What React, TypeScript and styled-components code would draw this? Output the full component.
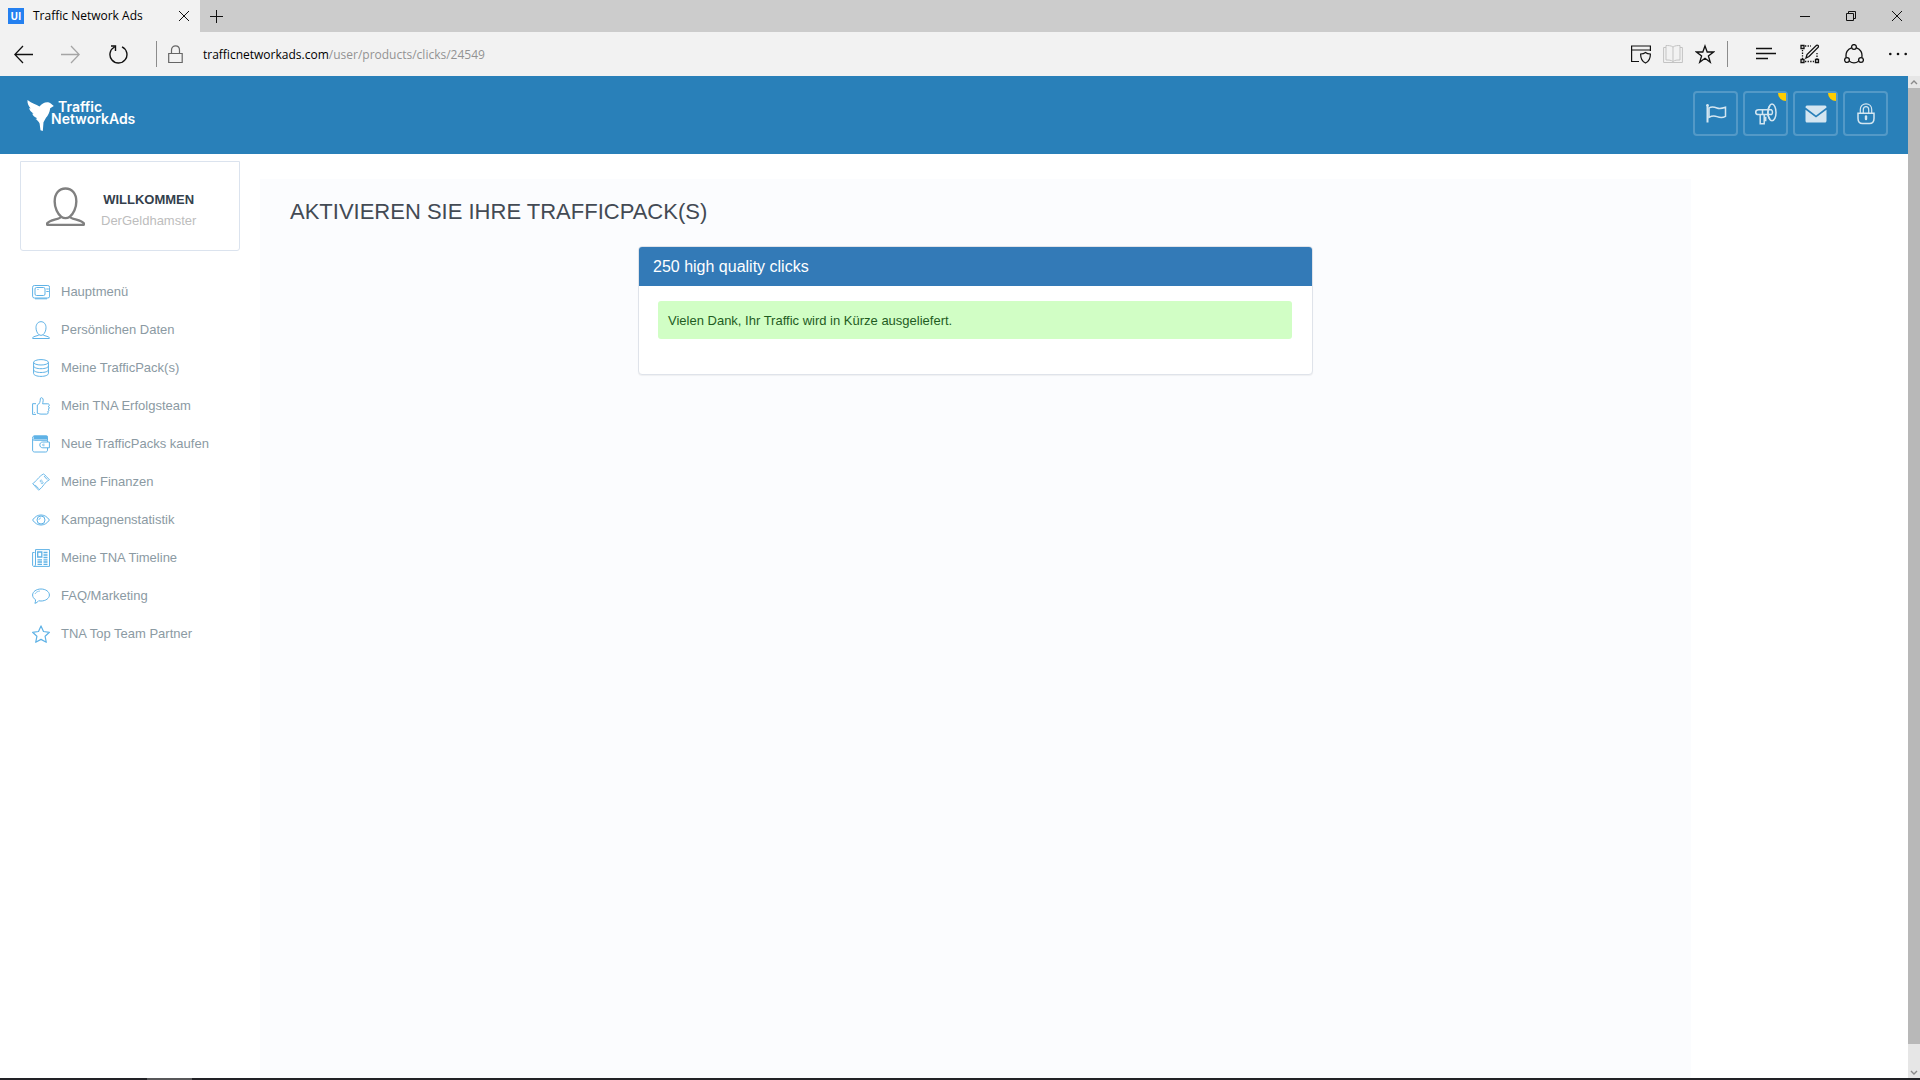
import React from "react";
import styled, { createGlobalStyle } from "styled-components";

const sans = `"Liberation Sans", Arial, sans-serif`;
const chromeFont = `"Open Sans", "Noto Sans", sans-serif`;

const GlobalStyle = createGlobalStyle`
  *, *::before, *::after { box-sizing: border-box; }
  body { margin: 0; background: #fff; font-family: ${sans}; }
  button { margin: 0; padding: 0; border: 0; background: none; color: inherit; font: inherit; cursor: pointer; }
  svg { display: block; flex: none; }
`;

const Shell = styled.div`
  display: flex;
  flex-direction: column;
  min-height: 100vh;
`;

const TabStrip = styled.div`
  display: flex;
  height: 32px;
  background: #ccc;
  color: #000;
  font: 12px/16px ${chromeFont};
`;

const Tab = styled.div`
  display: flex;
  align-items: center;
  width: 200px;
  height: 100%;
  padding: 0 11px 0 8px;
  background: #f2f2f2;
`;

const Favicon = styled.span`
  width: 16px;
  height: 16px;
  margin-right: 9px;
  background: #2480f0;
  color: #fff;
  font: bold 10px/16px ${chromeFont};
  text-align: center;
`;

const TabTitle = styled.span`
  flex: 1;
  white-space: nowrap;
`;

const ChromeButton = styled.button<{ $width: number; $dim?: boolean }>`
  display: flex;
  align-items: center;
  justify-content: center;
  width: ${(p) => p.$width}px;
  height: 100%;
  color: ${(p) => (p.$dim ? "#a5a5a5" : "#111")};
`;

const WindowControls = styled.div`
  display: flex;
  margin-left: auto;
`;

const Toolbar = styled.div`
  display: flex;
  align-items: center;
  height: 44px;
  background: #f2f2f2;
`;

const Divider = styled.span<{ $before: number; $after: number }>`
  width: 1px;
  height: 26px;
  margin: 0 ${(p) => p.$after}px 0 ${(p) => p.$before}px;
  background: #8c8c8c;
`;

const Address = styled.button`
  display: flex;
  flex: 1;
  align-items: center;
  gap: 20px;
  height: 100%;
  color: #000;
  font: 12px/18px ${chromeFont};
  text-align: left;
`;

const AddressText = styled.span`
  padding-top: 1px;
`;

const AddressPath = styled.span`
  color: #929292;
`;

const Viewport = styled.div`
  display: flex;
  flex: 1;
`;

const Page = styled.div`
  display: flex;
  flex: 1;
  flex-direction: column;
  min-width: 0;
`;

const Scrollbar = styled.div`
  display: flex;
  flex-direction: column;
  width: 12px;
  background: #e6e6e6;
  color: #8a8a8a;
`;

const ScrollButton = styled.button<{ $height: number }>`
  display: flex;
  align-items: center;
  justify-content: center;
  width: 12px;
  height: ${(p) => p.$height}px;
`;

const ScrollThumb = styled.div`
  flex: 1;
  margin-bottom: 24px;
  background: #b8b8b8;
`;

const Header = styled.header`
  display: flex;
  align-items: center;
  justify-content: space-between;
  height: 78px;
  padding: 0 20px 0 27px;
  background: #2980b9;
`;

const Logo = styled.a`
  display: flex;
  color: #fff;
  text-decoration: none;
  font: 600 14px/12px Inter, Lato, sans-serif;
`;

const LogoText = styled.span`
  display: flex;
  flex-direction: column;
  margin: 1px 0 0 -3px;
`;

const LogoTop = styled.span`
  padding-left: 7px;
`;

const Actions = styled.nav`
  display: flex;
  gap: 5px;
  margin-bottom: 3px;
`;

const ActionButton = styled.button`
  position: relative;
  display: flex;
  align-items: center;
  justify-content: center;
  width: 45px;
  height: 45px;
  border: 2px solid rgba(255, 255, 255, 0.2);
  border-radius: 4px;
  color: #d4e6f1;
`;

const Badge = styled.span`
  position: absolute;
  top: 0;
  right: 0;
  width: 8px;
  height: 8px;
  border-bottom-left-radius: 8px;
  background: #fc0;
`;

const Body = styled.div`
  display: flex;
  flex: 1;
`;

const Sidebar = styled.aside`
  flex: none;
  width: 260px;
  padding: 7px 20px 0;
`;

const UserCard = styled.div`
  display: flex;
  align-items: center;
  gap: 16px;
  height: 90px;
  padding-left: 25px;
  border: 1px solid #dbe3ee;
  border-radius: 0 0 3px 3px;
  color: #808080;
`;

const UserText = styled.div`
  padding-top: 7px;
  font-size: 13px;
  line-height: 21px;
  text-align: center;
  color: #bdbdbd;
`;

const Welcome = styled.strong`
  display: block;
  color: #34404c;
`;

const Menu = styled.ul`
  margin: 22px 0 0;
  padding: 0;
  list-style: none;
`;

const MenuLink = styled.a`
  display: flex;
  align-items: center;
  gap: 11px;
  height: 38px;
  padding-left: 12px;
  color: #8b9aa3;
  font-size: 13px;
  line-height: 18px;
  text-decoration: none;
  white-space: nowrap;

  svg { color: #5fb2e6; }
`;

const Content = styled.main`
  width: 75%;
  margin-top: 25px;
  padding: 18px 30px;
  background: #fbfcfe;
`;

const Title = styled.h1`
  margin: 0;
  color: #434a54;
  font-size: 22px;
  font-weight: 400;
  line-height: 30px;
  text-transform: uppercase;
`;

const Panel = styled.section`
  width: 100%;
  max-width: 675px;
  margin: 19px auto 0;
  overflow: hidden;
  border: 1px solid #dfe3ea;
  border-radius: 4px;
  background: #fff;
  box-shadow: 0 1px 1px rgba(0, 0, 0, 0.05);
`;

const PanelTitle = styled.h2`
  margin: 0;
  padding: 10px 14px 9px;
  background: #337ab7;
  color: #fff;
  font-size: 16px;
  font-weight: 400;
  line-height: 20px;
`;

const PanelBody = styled.div`
  padding: 15px 20px 35px 19px;
`;

const Alert = styled.p`
  margin: 0;
  padding: 11px 10px 9px;
  border-radius: 3px;
  background: #d1fec5;
  color: #1f5c1f;
  font-size: 13px;
  line-height: 18px;
`;

const Taskbar = styled.div`
  display: flex;
  height: 2px;
  padding-left: 147px;
  background: #222226;
`;

const TaskbarItem = styled.span`
  width: 45px;
  background: #58585a;
`;

type IconProps = { w?: number; h?: number; sw?: number; box?: string; children: React.ReactNode };

const Icon = ({ w = 20, h = w, sw = 1, box, children }: IconProps) => (
  <svg
    width={w}
    height={h}
    viewBox={box ?? `0 0 ${w} ${h}`}
    fill="none"
    stroke="currentColor"
    strokeWidth={sw}
    aria-hidden="true"
  >
    {children}
  </svg>
);

const UserGlyph = (
  <path d="M9 .7c3 0 5 2.4 5 6 0 3-1.400 5.800-3 7 .3 1.200 5.500 1.300 6.500 3.100.1.300 0 .7-.4.7H.9c-.4 0-.5-.4-.4-.7C1.500 15 6.700 14.900 7 13.700c-1.600-1.200-3-4-3-7C4 3.100 6 .7 9 .7zM7 13.700c1.200.8 2.800.8 4 0" />
);

const menu: { label: string; icon: React.ReactNode }[] = [
  {
    label: "Hauptmenü",
    icon: (
      <>
        <rect x=".6" y="2.500" width="17" height="12.500" rx="1.800" />
        <rect x="3" y="4.500" width="10" height="8" rx="1.500" />
        <path d="M14.300 6h2.500M14.300 8.500h2.500M3 15.800h12" />
        <path d="M5 6.500h2" strokeWidth=".5" />
      </>
    ),
  },
  { label: "Persönlichen Daten", icon: UserGlyph },
  {
    label: "Meine TrafficPack(s)",
    icon: (
      <>
        <ellipse cx="9" cy="3.300" rx="7.400" ry="2.700" />
        <path d="M1.600 3.300v11.200c0 1.600 3.300 2.900 7.400 2.900s7.400-1.300 7.400-2.900V3.300M1.600 7c0 1.600 3.300 2.700 7.400 2.700s7.400-1.100 7.400-2.700M1.600 10.800c0 1.600 3.300 2.700 7.400 2.700s7.400-1.100 7.400-2.700" />
      </>
    ),
  },
  {
    label: "Mein TNA Erfolgsteam",
    icon: (
      <>
        <path d="M5.300 8C7.700 7 8.300 4.500 8.300 2c0-2 2.900-1.800 2.900 1.300 0 1.500-.6 2.600-.6 3.500h5.200c2 0 2 2.600.3 2.700 1.700.2 1.500 2.700-.1 2.700 1.300.3 1.100 2.500-.4 2.500 1 .4.7 2.400-.9 2.400H9c-1.800 0-2.200-.8-3.700-.8z" />
        <path d="M4 6.700H.6v10.700H4M2.200 15.500h.6" />
      </>
    ),
  },
  {
    label: "Neue TrafficPacks kaufen",
    icon: (
      <>
        <path d="M1.600.8h14v3.700h-14z" fill="currentColor" stroke="none" />
        <path d="M15.500 7V5.300H2.500C1 5.300.6 4.500.6 3.500V15c0 1.300.8 2 2 2h11c1.200 0 1.900-.7 1.900-2v-2.200M.6 3C.6 1.500 1.500.8 3 .8h11c1 0 1.500.4 1.500 1.400v3M17.400 7h-6.600c-4 0-4 5.800 0 5.800h6.600z" />
        <path d="M12.500 9.200h-1.200c-1 0-1 1.500 0 1.500h1.200" strokeWidth=".8" />
      </>
    ),
  },
  {
    label: "Meine Finanzen",
    icon: (
      <>
        <path d="M.7 10.500C3.500 9.500 7 3 11.500 1c2 1.200 3.500 3.200 5.900 5.800C13 8.300 11 14.500 6.700 17.200 5 15.200 2.500 13 .7 10.500zM3 11.800l3.800 3.900M12 3l3.200 3.600" strokeWidth=".9" />
        <path d="M10.300 7.500C9.300 6.600 7.500 7.400 8.300 8.600c.9.900 2.200-.2 2.800.6.600 1.100-1.200 2-2.300 1" strokeWidth=".8" />
      </>
    ),
  },
  {
    label: "Kampagnenstatistik",
    icon: (
      <>
        <path d="M.6 9C5 2.300 13 2.300 17.400 9 13 15.700 5 15.700.6 9z" />
        <circle cx="9" cy="9" r="4" />
        <path d="M7 9c0-1.300.9-2 2-2" strokeWidth=".8" />
      </>
    ),
  },
  {
    label: "Meine TNA Timeline",
    icon: (
      <>
        <path d="M3.500.6h14v16.800H2C1 17.400.6 17 .6 16V3.500h2M3.500.6V15c0 1.400-.4 2.400-1.400 2.400" />
        <path d="M5.700 3h4.100v5H5.700z" strokeWidth="1.300" />
        <path d="M11.500 3.500h4M11.500 6h4M11.500 8.500h4M5.500 10.800h4.500M11.500 10.800h4M5.500 13h4.500M11.500 13h4M5.500 15.300h4.500M11.500 15.300h4" strokeWidth="1.300" />
      </>
    ),
  },
  {
    label: "FAQ/Marketing",
    icon: (
      <>
        <path d="M9 2c4.700 0 8.400 2.700 8.400 6s-3.700 6-8.400 6c-.8 0-1.600-.1-2.400-.2C5.600 15 4.500 16 2.900 16.300c.5-.9.7-2 .6-3.600C1.700 11.600.6 9.900.6 8c0-3.300 3.700-6 8.400-6z" />
        <path d="M3 7c.8-1.800 2.700-2.800 5-3" strokeWidth=".7" />
      </>
    ),
  },
  {
    label: "TNA Top Team Partner",
    icon: <path d="M9 .9l2.500 5.600 5.900.8-4.300 4 1.200 6-5.300-2.900-5.300 2.900 1.200-6-4.300-4 5.900-.8z" strokeWidth="1.200" strokeLinejoin="round" />,
  },
];

const actions: { label: string; badge?: boolean; icon: React.ReactNode }[] = [
  {
    label: "Sprache",
    icon: (
      <>
        <path d="M2.500 2.500v17" strokeWidth="2" />
        <circle cx="2.500" cy="2.300" r="1.300" fill="currentColor" stroke="none" />
        <path d="M4 5c3-2 5.500-1 8 0s5 .5 8.500-.7v9c-3 1.700-6 1.200-8.500.3s-5-.9-8 .7z" />
      </>
    ),
  },
  {
    label: "Neuigkeiten",
    badge: true,
    icon: (
      <>
        <path d="M13 6.800H3.500c-3.700 0-3.700 4.800 0 4.800H13M7.500 7v4.500M5.200 12v8.800h4V12M9.200 14.500h1.500v3H9.200" />
        <ellipse cx="17" cy="9.400" rx="4" ry="8.400" />
        <path d="M15 2.500c-3 4-3 10 0 14" />
        <path d="M13 6.800h3.500c1.300.8 1.300 4 0 4.800H13" />
      </>
    ),
  },
  {
    label: "Nachrichten",
    badge: true,
    icon: (
      <>
        <path d="M.5 4.500C.5 3 1.300 2.500 2.500 2.500h17c1.200 0 2 .5 2 2L11 12.500z" fill="currentColor" stroke="none" />
        <path d="M.5 6.700L11 14.500l10.500-7.800v11c0 1.300-.8 1.800-2 1.800h-17c-1.200 0-2-.5-2-1.800z" fill="currentColor" stroke="none" />
      </>
    ),
  },
  {
    label: "Abmelden",
    icon: (
      <>
        <path d="M3 10.200h16v5c0 3.500-2 5.300-4.500 5.300h-7C5 20.500 3 18.700 3 15.200z" />
        <path d="M5.300 10V6.500C5.300 3 7.700.8 11 .8s5.700 2.200 5.700 5.700V10M8.300 10V6.500c0-1.900 1.100-2.900 2.700-2.900s2.700 1 2.700 2.900V10" strokeWidth="1.200" />
        <path d="M11 13.500v2.600" strokeWidth="2.400" strokeLinecap="round" />
      </>
    ),
  },
];

export default function App() {
  return (
    <Shell>
      <GlobalStyle />
      <TabStrip>
        <Tab>
          <Favicon>UI</Favicon>
          <TabTitle>Traffic Network Ads</TabTitle>
          <ChromeButton $width={10} aria-label="Tab schließen">
            <Icon w={10}><path d="M0 0l10 10M10 0L0 10" /></Icon>
          </ChromeButton>
        </Tab>
        <ChromeButton $width={33} aria-label="Neuer Tab">
          <Icon w={13}><path d="M6.500 0v13M0 6.500h13" /></Icon>
        </ChromeButton>
        <WindowControls>
          <ChromeButton $width={46} aria-label="Minimieren">
            <Icon w={10}><path d="M0 5.500h10" /></Icon>
          </ChromeButton>
          <ChromeButton $width={46} aria-label="Verkleinern">
            <Icon w={10}><path d="M.5 2.500h7v7h-7zM2.500 2.500v-2h7v7h-2" /></Icon>
          </ChromeButton>
          <ChromeButton $width={46} aria-label="Schließen">
            <Icon w={10}><path d="M0 0l10 10M10 0L0 10" /></Icon>
          </ChromeButton>
        </WindowControls>
      </TabStrip>

      <Toolbar>
        <ChromeButton $width={46} aria-label="Zurück">
          <Icon w={19} sw={1.3}><path d="M19 9.500H1M9 1L.8 9.500 9 18" /></Icon>
        </ChromeButton>
        <ChromeButton $width={48} $dim aria-label="Vorwärts">
          <Icon w={19} sw={1.3}><path d="M0 9.500h18M10 1l8.200 8.500L10 18" /></Icon>
        </ChromeButton>
        <ChromeButton $width={48} aria-label="Aktualisieren">
          <Icon w={19} sw={1.4}><path d="M5.500 2A8.500 8.500 0 1 0 13 1.800M2 1h4.500v5" /></Icon>
        </ChromeButton>
        <Divider $before={14} $after={11} />
        <Address aria-label="Adresse">
          <Icon w={15} h={18} sw={1.2}><path d="M.7 8.500h13.500v9H.7zM3.500 8.500V5c0-5.500 8-5.500 8 0v3.500" stroke="#666" /></Icon>
          <AddressText>trafficnetworkads.com<AddressPath>/user/products/clicks/24549</AddressPath></AddressText>
        </Address>
        <ChromeButton $width={32} aria-label="Sicherheitsbericht">
          <Icon w={20} sw={1.2}>
            <path d="M8 17.500H.6V2h18.800v5M.6 6h18.800M14.500 8.500c1.200 1 3 1.500 4.900 1.500 0 4.500-1.400 7.500-4.900 9-3.500-1.500-4.900-4.500-4.900-9 1.900 0 3.700-.5 4.900-1.500z" />
          </Icon>
        </ChromeButton>
        <ChromeButton $width={32} aria-label="Leseansicht" disabled>
          <Icon w={20}>
            <path d="M10 3C8 1.500 5 1.500 3 1.500V16c3 0 5 0 7 1.500 2-1.500 4-1.500 7-1.500V1.500c-2 0-5 0-7 1.500zv14.500M3 3.500H.6v15h18.800v-15H17" stroke="#c3c3c3" />
          </Icon>
        </ChromeButton>
        <ChromeButton $width={32} aria-label="Favorit hinzufügen">
          <Icon w={20} sw={1.3}><path d="M10 2l2.200 6h6.300l-5.100 3.900 1.900 6.300-5.300-3.900-5.300 3.900 1.900-6.300L1.500 8h6.300z" /></Icon>
        </ChromeButton>
        <Divider $before={6} $after={16} />
        <ChromeButton $width={44} aria-label="Hub">
          <Icon w={20} sw={1.3}><path d="M0 4.500h16M0 9.500h20M0 14.500h12" /></Icon>
        </ChromeButton>
        <ChromeButton $width={44} aria-label="Webseitennotiz">
          <Icon w={20} sw={1.3}>
            <path d="M1 1.500h3v3H1zM1 15.500h3v3H1zM15.500 15.500h3v3h-3z" />
            <path d="M5 2h6M2.500 6v9M17 9v6M5 17.500h10" strokeDasharray="1.300 1.300" />
            <path d="M6 14l1-3.500L16.500 1.300c1.300-.5 2.400.5 1.800 1.900L9 12.500z" />
          </Icon>
        </ChromeButton>
        <ChromeButton $width={44} aria-label="Teilen">
          <Icon w={20} sw={1.3}>
            <circle cx="10" cy="3" r="2.400" /><circle cx="3" cy="16" r="2.400" /><circle cx="17" cy="16" r="2.400" />
            <path d="M7.500 3.800C3.500 5 1.300 9 2.200 13.500M12.500 3.800c4 1.200 6.200 5.200 5.300 9.700M5.400 17.300c2.800 2 6.400 2 9.200 0" />
          </Icon>
        </ChromeButton>
        <ChromeButton $width={44} aria-label="Mehr">
          <Icon w={20}>
            <g fill="currentColor" stroke="none"><circle cx="2.300" cy="10" r="1.300" /><circle cx="10" cy="10" r="1.300" /><circle cx="17.700" cy="10" r="1.300" /></g>
          </Icon>
        </ChromeButton>
      </Toolbar>

      <Viewport>
        <Page>
          <Header>
            <Logo href="#" aria-label="Traffic NetworkAds">
              <Icon w={27} h={31}>
                <path
                  d="M.5 0C5 3.500 9 4 12.500 6.500 15 3.500 18 1.800 22 2.500c1.500.3 2.500 1.700 4.800 3.600l-3.600 2.200c-.5 4.200-2.200 7.200-4.200 9.500l-2.500 4.500L15.800 31l-2.300-.8-.9-6.700c-1-2-2.300-3.500-4-4.500l1.600-.7C7.500 17 5.700 15.500 5.300 13.500l1.300.2C4 12 2.300 10 2.200 8l1.400.4C1.500 6 .2 3.500.5 0z"
                  fill="currentColor"
                  stroke="none"
                />
              </Icon>
              <LogoText>
                <LogoTop>Traffic</LogoTop>
                <span>NetworkAds</span>
              </LogoText>
            </Logo>
            <Actions aria-label="Schnellzugriff">
              {actions.map((a) => (
                <ActionButton key={a.label} aria-label={a.label}>
                  <Icon w={22} sw={1.5}>{a.icon}</Icon>
                  {a.badge && <Badge />}
                </ActionButton>
              ))}
            </Actions>
          </Header>
          <Body>
            <Sidebar>
              <UserCard>
                <Icon w={39} sw={1.1} box="0 0 18 18">{UserGlyph}</Icon>
                <UserText>
                  <Welcome>WILLKOMMEN</Welcome>
                  DerGeldhamster
                </UserText>
              </UserCard>
              <nav aria-label="Hauptnavigation">
                <Menu>
                  {menu.map((m) => (
                    <li key={m.label}>
                      <MenuLink href="#">
                        <Icon w={18}>{m.icon}</Icon>
                        {m.label}
                      </MenuLink>
                    </li>
                  ))}
                </Menu>
              </nav>
            </Sidebar>
            <Content>
              <Title>Aktivieren Sie Ihre TrafficPack(s)</Title>
              <Panel>
                <PanelTitle>250 high quality clicks</PanelTitle>
                <PanelBody>
                  <Alert role="status">Vielen Dank, Ihr Traffic wird in Kürze ausgeliefert.</Alert>
                </PanelBody>
              </Panel>
            </Content>
          </Body>
        </Page>
        <Scrollbar>
          <ScrollButton $height={12} aria-label="Nach oben">
            <Icon w={8} h={6} sw={1.4}><path d="M1 5l3-3 3 3" /></Icon>
          </ScrollButton>
          <ScrollThumb />
          <ScrollButton $height={10} aria-label="Nach unten">
            <Icon w={8} h={6} sw={1.4}><path d="M1 1l3 3 3-3" /></Icon>
          </ScrollButton>
        </Scrollbar>
      </Viewport>
      <Taskbar><TaskbarItem /></Taskbar>
    </Shell>
  );
}
